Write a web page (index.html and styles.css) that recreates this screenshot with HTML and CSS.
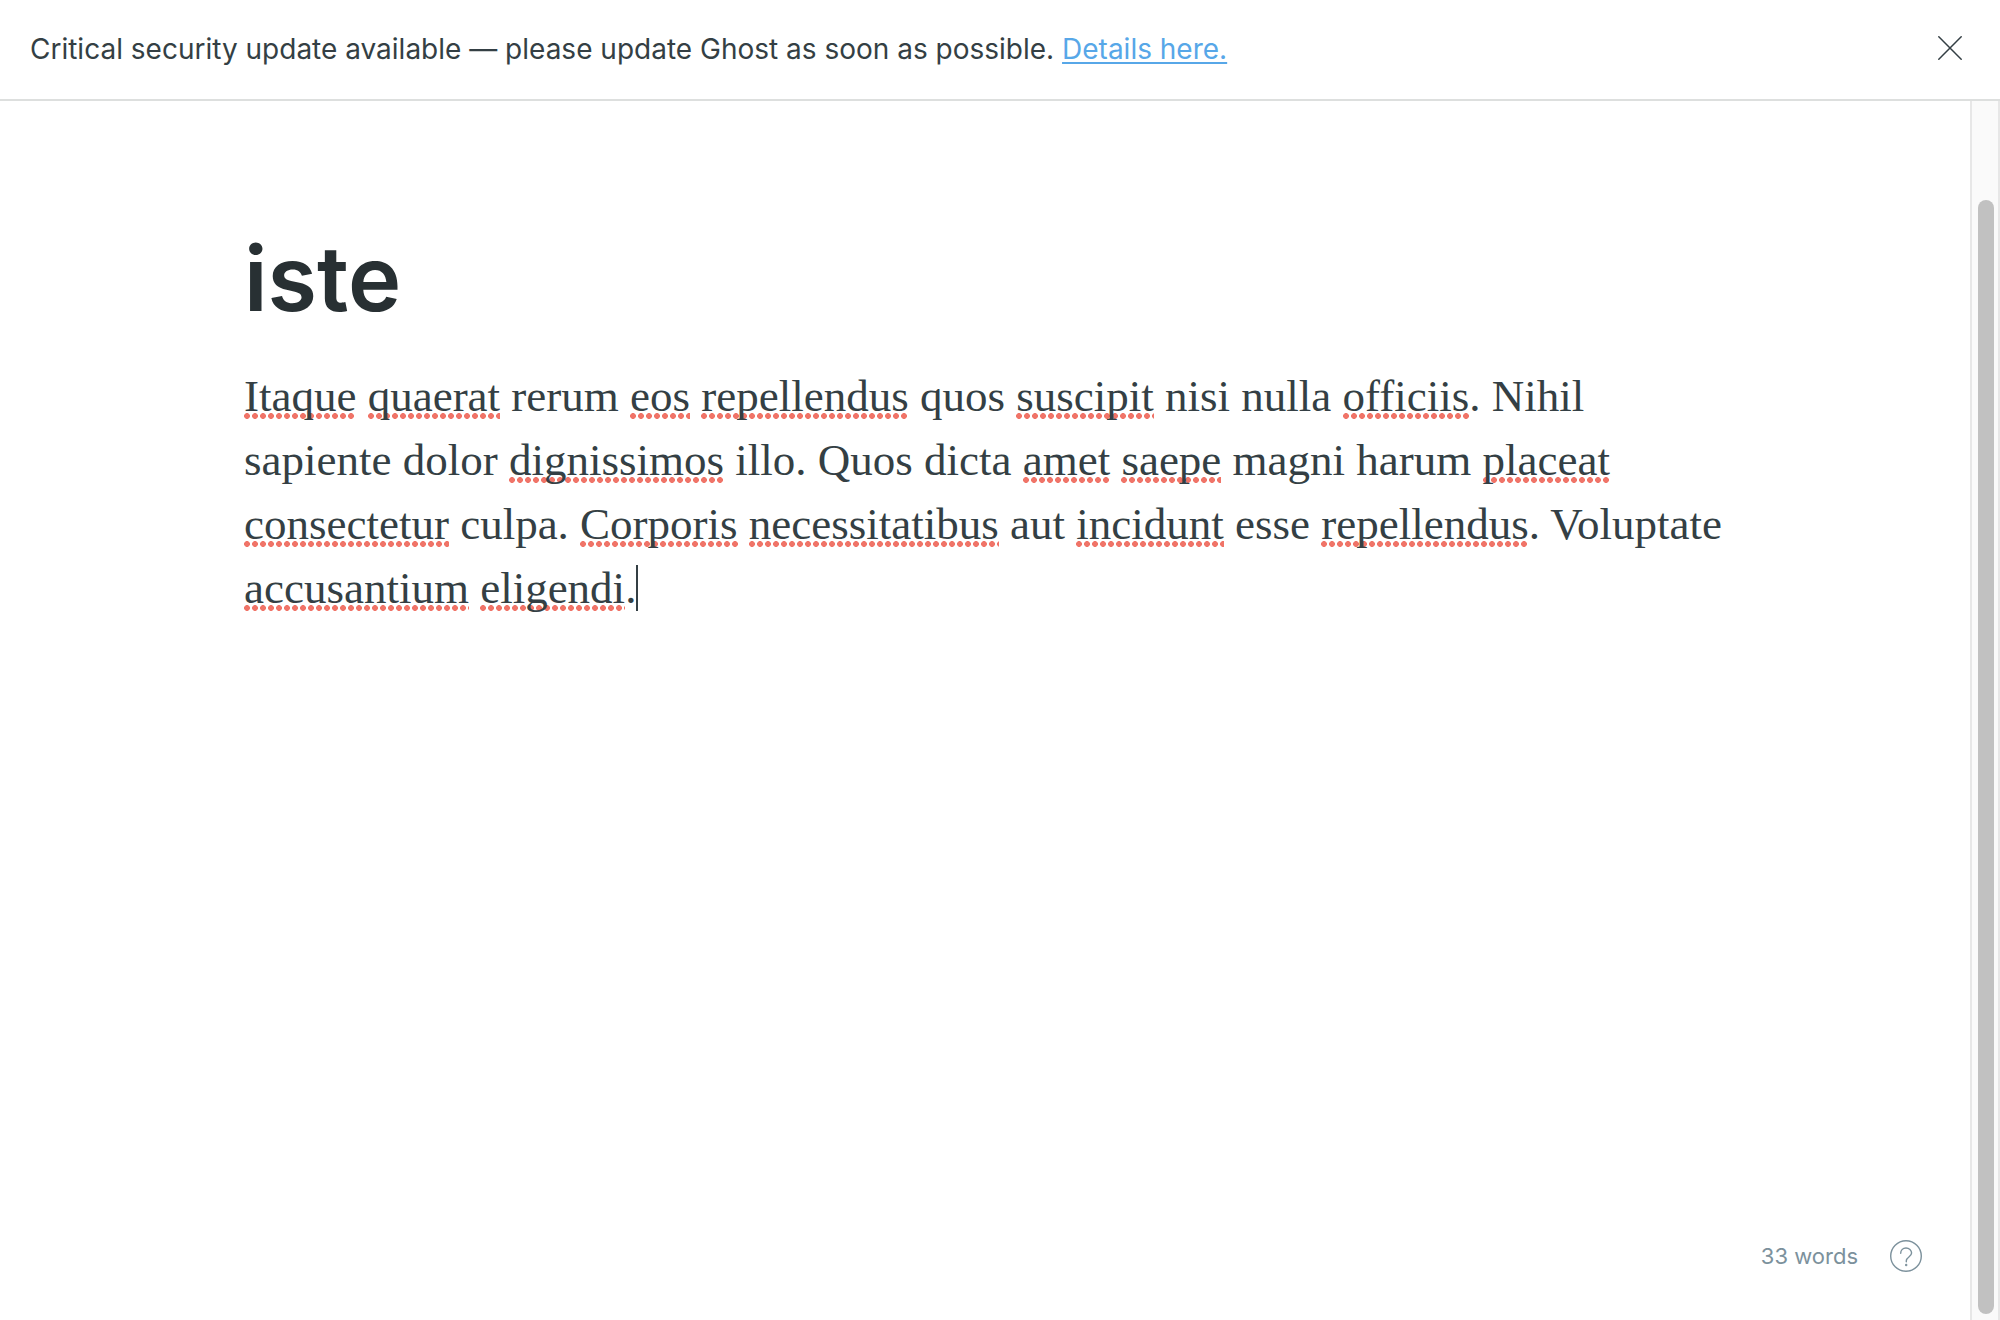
FILE: index.html
```html
<!DOCTYPE html>
<html lang="en">
<head>
<meta charset="utf-8">
<meta name="viewport" content="width=device-width, initial-scale=1">
<title>Editor - Ghost</title>
<link rel="stylesheet" href="styles.css">
</head>
<body>
<aside class="alert" role="alert">
  <p class="alert-text">Critical security update available — please update Ghost as soon as possible. <a class="alert-link" href="#details">Details here.</a></p>
  <button class="icon-button alert-close" type="button" aria-label="Close">
    <svg width="24" height="24" viewBox="0 0 24 24" fill="none" stroke="currentColor" stroke-width="1.5" stroke-linecap="round"><path d="M.8.8l22.4 22.4M23.2.8L.8 23.2"/></svg>
  </button>
</aside>
<div class="workspace">
  <main class="editor">
    <input class="title" type="text" aria-label="Post title" value="iste" spellcheck="false">
    <div class="content" role="textbox" aria-multiline="true" aria-label="Post content" contenteditable="true" spellcheck="false"><p class="paragraph"><span class="misspelt">Itaque</span> <span class="misspelt">quaerat</span> rerum <span class="misspelt">eos</span> <span class="misspelt">repellendus</span> quos <span class="misspelt">suscipit</span> nisi nulla <span class="misspelt">officiis</span>. Nihil<br>sapiente dolor <span class="misspelt">dignissimos</span> illo. Quos dicta <span class="misspelt">amet</span> <span class="misspelt">saepe</span> magni harum <span class="misspelt">placeat</span><br><span class="misspelt">consectetur</span> culpa. <span class="misspelt">Corporis</span> <span class="misspelt">necessitatibus</span> aut <span class="misspelt">incidunt</span> esse <span class="misspelt">repellendus</span>. Voluptate<br><span class="misspelt">accusantium</span> <span class="misspelt">eligendi</span>.<span class="caret"></span></p></div>
    <footer class="status">
      <span>33 words</span>
      <button class="icon-button" type="button" aria-label="Help">
        <svg width="32" height="32" viewBox="0 0 32 32" fill="none" stroke="currentColor" stroke-width="1.4" stroke-linecap="round" stroke-linejoin="round"><circle cx="16" cy="16" r="15.3"/><path d="M10.7 13.2c0-3 2.2-5.2 5.3-5.2s5.6 2.2 5.6 5.1c0 3.6-5.3 4.1-5.3 7.6v1"/><circle cx="16.2" cy="25" r=".5" fill="currentColor"/></svg>
      </button>
    </footer>
  </main>
  <div class="scroll-track"><div class="scroll-thumb"></div></div>
</div>
</body>
</html>
```
FILE: styles.css
```css
* {
  box-sizing: border-box;
}

body {
  display: flex;
  flex-direction: column;
  min-height: 100vh;
  margin: 0;
  background: #fff;
  color: #343f44;
  font-family: Inter, sans-serif;
}

.alert {
  display: flex;
  align-items: center;
  justify-content: space-between;
  padding: 32px 38px 32px 30px;
  border-bottom: 2px solid #dddfde;
}

.alert-text {
  margin: 0;
  font-size: 28px;
  line-height: 35px;
}

.alert-link {
  color: #57a7e8;
  text-decoration-thickness: 2px;
  text-underline-offset: 3px;
  text-decoration-skip-ink: none;
}

.icon-button {
  display: flex;
  padding: 0;
  border: 0;
  background: none;
  color: inherit;
  cursor: pointer;
}

.alert-close {
  padding-bottom: 3px;
}

.workspace {
  display: flex;
  flex: 1;
}

.editor {
  display: flex;
  flex: 1;
  flex-direction: column;
  padding: 122px 48px 48px 244px;
}

.title {
  width: 100%;
  height: 112px;
  margin: 0 0 29px;
  padding: 0;
  border: 0;
  outline: 0;
  background: none;
  color: #283033;
  font: 600 90px/112px Inter, sans-serif;
}

.content {
  flex: 1;
  outline: 0;
  font: 45px/64px "Liberation Serif", serif;
}

.paragraph {
  margin: 0;
}

.misspelt {
  background: radial-gradient(circle at 3px 3px, #f07468 2.6px, transparent 3.2px) left bottom 2px / 8px 6px repeat-x;
}

.caret {
  display: inline-block;
  width: 2px;
  height: 46px;
  background: #343f44;
  vertical-align: -8px;
}

.status {
  display: flex;
  align-items: center;
  justify-content: flex-end;
  gap: 32px;
  color: #7c919c;
  font-size: 22px;
  line-height: 32px;
}

.scroll-track {
  display: flex;
  width: 30px;
  padding: 99px 4px 6px 6px;
  border: solid #e7e7e7;
  border-width: 0 2px;
  background: #fafafa;
}

.scroll-thumb {
  flex: 1;
  border-radius: 8px;
  background: #c1c1c1;
}
```
